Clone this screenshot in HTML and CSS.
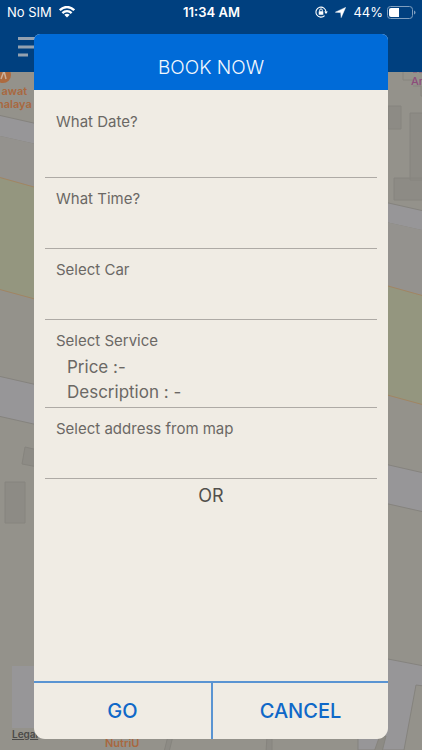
FILE: index.html
```html
<!DOCTYPE html>
<html lang="en">
<head>
<meta charset="utf-8">
<meta name="viewport" content="width=device-width, initial-scale=1">
<title>Book now</title>
<link rel="stylesheet" href="styles.css">
</head>
<body>
<div class="screen">
  <header class="navbar">
    <div class="status">
      <div class="status-left">
        <span>No SIM</span>
        <svg width="16" height="12" viewBox="0 0 16 12" aria-hidden="true"><g fill="none" stroke="#fff" stroke-width="2.300"><path d="M.8 4.200C5-.1 11-.1 15.200 4.200"/><path d="M3.400 7.100C6 4.500 10 4.500 12.600 7.100"/></g><path fill="#fff" d="M5.300 8.800C6.900 7.400 9.100 7.400 10.700 8.800L8 11.600z"/></svg>
      </div>
      <span class="clock">11:34 AM</span>
      <div class="status-right">
        <svg class="lock" width="13" height="12" viewBox="0 0 13 12" aria-hidden="true"><path fill="none" stroke="#fff" stroke-width="1.100" d="M9.600 9.600A5 5 0 1 1 11 6"/><path fill="#fff" d="M9.200 5.600h3.600L11 8z"/><rect x="3.700" y="5.200" width="4.600" height="3.600" rx=".4" fill="#fff"/><path fill="none" stroke="#fff" d="M4.700 5.500V4.200a1.300 1.300 0 0 1 2.600 0v1.300"/></svg>
        <svg class="arrow" width="11" height="11" viewBox="0 0 11 11" aria-hidden="true"><path fill="#fff" stroke="#fff" stroke-width=".5" stroke-linejoin="round" d="M10.600.4 6.200 10.600 5.700 5.500.4 5.200z"/></svg>
        <span>44%</span>
        <svg width="29" height="13" viewBox="0 0 29 13" aria-hidden="true"><rect x=".5" y=".5" width="25" height="12" rx="3" fill="none" stroke="#7f9fbf"/><path fill="#fff" d="M4 2h8v9H4a2 2 0 0 1-2-2V4a2 2 0 0 1 2-2z"/><path fill="#7f9fbf" d="M27 4.500q1.500.5 1.500 2t-1.500 2z"/></svg>
      </div>
    </div>
    <button class="menu" type="button" aria-label="Menu">
      <svg width="24" height="20" viewBox="0 0 24 20" aria-hidden="true"><path stroke="#93a1b0" stroke-width="3" d="M0 1.500h24M0 10h20M0 18h10"/></svg>
    </button>
  </header>

  <main class="map">
    <svg class="map-art" viewBox="0 72 422 678" preserveAspectRatio="xMidYMin slice" aria-hidden="true">
      <rect y="72" width="422" height="678" fill="#94928b"/>
      <path fill="#979698" stroke="#85837e" d="M-2 115 424 211v20L-2 136z"/>
      <path fill="#94928e" d="M0 136l422 94v66L0 177z"/>
      <path fill="#94967f" stroke="#a18563" d="M-2 177 34 187 388 286 424 296v109L-2 289z"/>
      <path fill="#979698" stroke="#85837e" d="M-2 376 424 473v39L-2 416z"/>
      <path fill="#979698" stroke="#85837e" d="M424 666 388 659l-30-6v97h46l12-65 8 1z"/>
      <path fill="#979698" d="M12 666h24v62H12z"/>
      <g fill="#8d8b85" stroke="#86847e">
        <path d="M5 482h20v41H5zM25 447l13 3v17l-16-3z"/>
        <path d="M388 106h13v23h-13zM410 113h14v67h-14zM394 178h30v22h-30z"/>
        <path fill="none" d="M403 71v9h10M413 86h8v10h3"/>
        <path d="M170 736h-2l-4 16h5l4-16zM267 736l-1 16h6v-16zM379 738l-5 14h8l4-16z"/>
      </g>
      <circle cx="3" cy="75" r="8" fill="#ad6a3f"/>
      <path d="M1 79l3-8 2 8" fill="none" stroke="#cab09c" stroke-width="1.500"/>
      <path d="M413 72h4M419 72h3" stroke="#8d4c7b"/>
    </svg>
    <span class="pin place">awat<br>nalaya</span>
    <span class="pin shop">Ar</span>
    <a class="pin legal" href="#legal">Legal</a>
    <span class="pin cafe">NutriU</span>
  </main>

  <form class="dialog" role="dialog" aria-labelledby="title">
    <h1 id="title">BOOK NOW</h1>
    <div class="fields">
      <div class="field"><label for="date">What Date?</label><input id="date" type="text"></div>
      <div class="field"><label for="time">What Time?</label><input id="time" type="text"></div>
      <div class="field"><label for="car">Select Car</label><select id="car"><option></option></select></div>
      <div class="field service">
        <div class="service-row"><label for="service">Select Service</label><select id="service"><option></option></select></div>
        <div class="details"><p>Price :-</p><p>Description : -</p></div>
      </div>
      <div class="field"><label for="address">Select address from map</label><input id="address" type="text"></div>
      <p class="or">OR</p>
    </div>
    <div class="actions">
      <button type="submit">GO</button>
      <button type="button">CANCEL</button>
    </div>
  </form>
</div>
</body>
</html>
```
FILE: styles.css
```css
* { box-sizing: border-box; }
body, h1, p { margin: 0; }
body { font-family: Inter, "Liberation Sans", sans-serif; background: #94928b; }
button, input, select { font: inherit; border: 0; background: none; padding: 0; border-radius: 0; appearance: none; outline: 0; }

.screen {
  position: relative;
  min-height: 100vh;
  display: flex;
  flex-direction: column;
  overflow: hidden;
}

.navbar { height: 72px; background: #00407f; }
.status {
  display: grid;
  grid-template-columns: 1fr auto 1fr;
  align-items: center;
  height: 24px;
  padding: 0 6px 0 7px;
  color: #fff;
  font-size: 13px;
}
.status-left, .status-right { display: flex; align-items: center; }
.status-left { gap: 7px; }
.status-right { justify-content: flex-end; gap: 4px; }
.lock { margin-right: 3px; }
.arrow { margin-right: 3px; }
.clock { font-weight: 600; }
.menu { display: block; margin: 13px 0 0 18px; line-height: 0; }

.map { position: relative; flex: 1; }
.map-art { position: absolute; inset: 0; width: 100%; height: 100%; }
.pin { position: absolute; font-size: 11px; line-height: 13px; font-weight: 600; color: #a9683f; }
.place { left: -3px; top: 13px; text-align: center; }
.shop { left: 411px; top: 3px; color: #8d4c7b; font-weight: 500; }
.legal { left: 12px; bottom: 9px; font-size: 10px; color: #4b4a48; }
.cafe { left: 105px; bottom: 0; }

.dialog {
  position: absolute;
  inset: 34px 34px 11px;
  display: flex;
  flex-direction: column;
  overflow: hidden;
  border-radius: 6px 6px 11px 11px;
  background: #f0ece4;
  color: #6b6864;
}
h1 {
  height: 56px;
  padding-top: 10px;
  background: #006bd8;
  color: #f3f8fd;
  font-size: 19px;
  font-weight: 300;
  line-height: 48px;
  text-align: center;
}
.fields { flex: 1; padding: 11px 11px 0; }
.field {
  display: flex;
  flex-direction: column;
  min-height: 71px;
  padding: 11px 11px 0;
  border-bottom: 1px solid #aeaaa5;
}
.field:first-child { min-height: 77px; }
.field label { font-size: 15px; line-height: 20px; }
.field input, .field select { flex: 1; width: 100%; min-width: 0; font-size: 16px; }
.service { min-height: 88px; }
.service-row { display: flex; gap: 8px; height: 20px; }
.service-row label { white-space: nowrap; }
.details { padding: 4px 11px 2px; font-size: 17px; line-height: 25px; }
.or { padding-top: 4px; color: #52504c; font-size: 18px; line-height: 26px; text-align: center; }

.actions { display: grid; grid-template-columns: 1fr 1fr; height: 58px; border-top: 2px solid #5a94d2; }
.actions button { color: #0f68c8; font-size: 20px; font-weight: 500; }
.actions button + button { border-left: 2px solid #5a94d2; }
```
